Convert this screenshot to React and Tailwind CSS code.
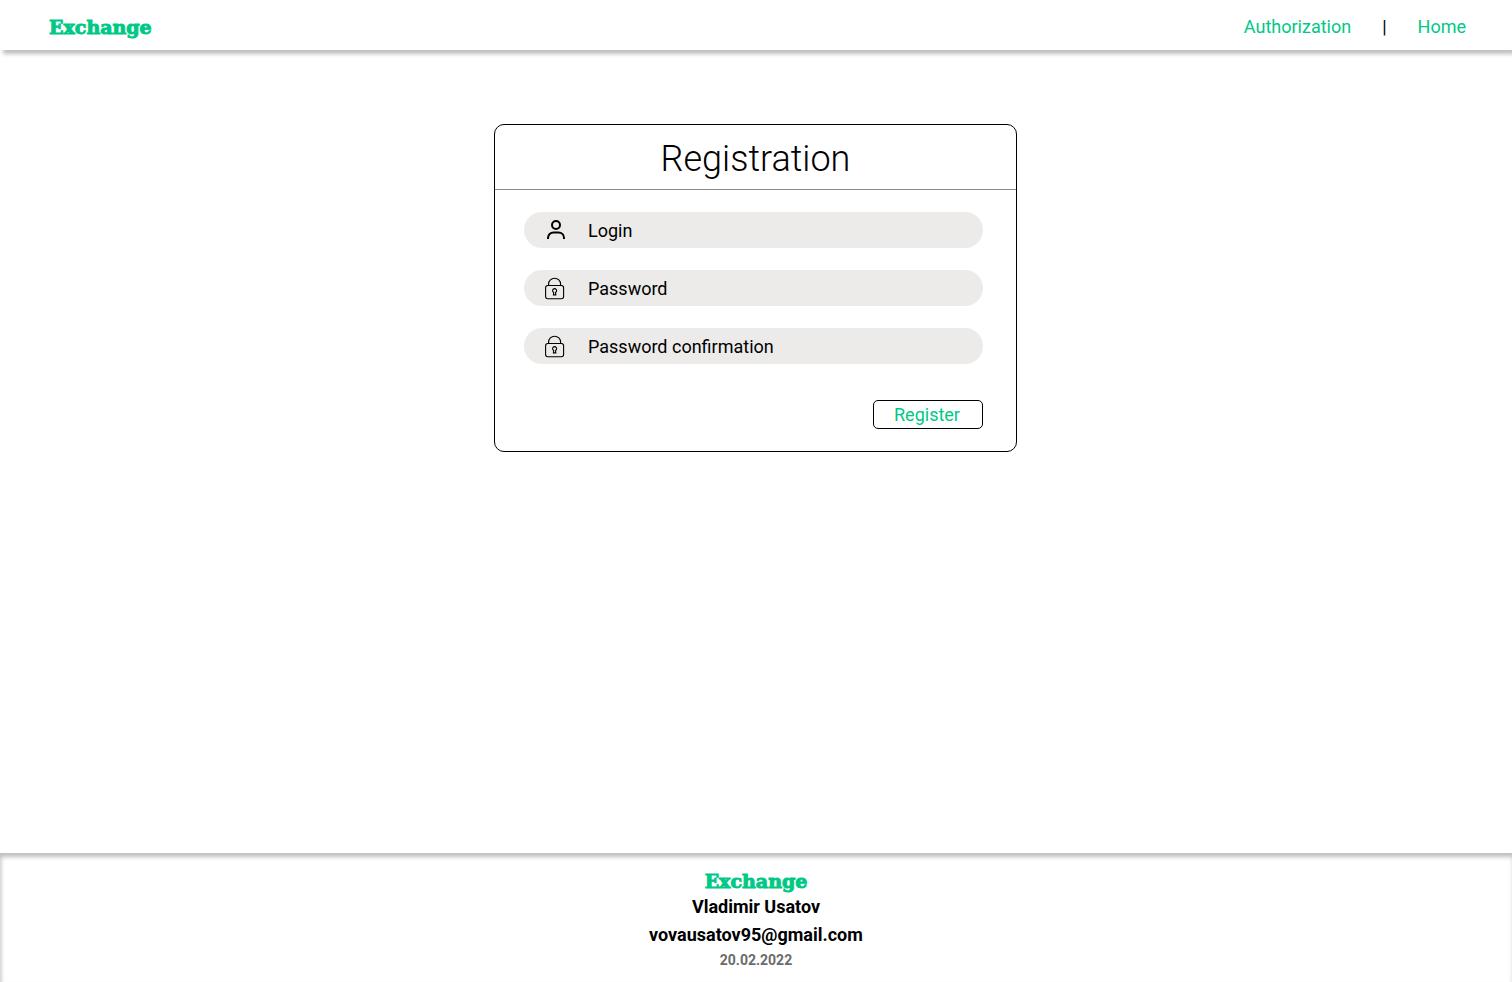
function UserIcon() {
  return (
    <svg width="22" height="20" viewBox="0 0 22 20" fill="none" stroke="black" strokeWidth="2" aria-hidden="true">
      <circle cx="11" cy="5" r="4" />
      <path d="M3 19v-1c0-3.200 2.500-5.500 5.500-5.500h5c3 0 5.500 2.300 5.500 5.500v1" />
    </svg>
  );
}

function LockIcon() {
  return (
    <svg width="20" height="24" viewBox="0 0 20 24" fill="none" stroke="black" strokeWidth="1.100" aria-hidden="true">
      <rect x="0.600" y="9.500" width="18" height="13.200" rx="2.200" />
      <path d="M3.600 9.500V8a6 5.800 0 0 1 12 0v1.500" />
      <path d="M8.700 16.400a2 2 0 1 1 1.800 0l.3 2.500H8.400z" />
    </svg>
  );
}

function Logo() {
  return (
    <span className="font-['DejaVu_Serif',serif] text-[19px] leading-[26px] font-bold text-[#00c985] [-webkit-text-stroke:1px_#00c985]">
      Exchange
    </span>
  );
}

function Field({ id, label, type, autoComplete, icon }) {
  return (
    <div className="flex h-9 items-center rounded-full bg-[#ecebe9] pr-5 pl-[21px]">
      <label htmlFor={id} aria-label={label} className="flex w-[43px] shrink-0">
        {icon}
      </label>
      <input
        id={id}
        type={type}
        placeholder={label}
        autoComplete={autoComplete}
        className="h-9 min-w-0 flex-1 bg-transparent text-[18px] text-black outline-none placeholder:text-black placeholder:opacity-100"
      />
    </div>
  );
}

export default function App() {
  return (
    <div className="flex min-h-screen flex-col bg-white font-[Roboto,sans-serif] text-black">
      <header className="flex h-[50px] items-center justify-between pt-1 pr-[46px] pl-[49px] shadow-[3px_4px_4px_rgba(0,0,0,0.25)]">
        <a href="#home" className="flex">
          <Logo />
        </a>
        <nav className="flex items-center gap-[31px] text-[18px] leading-6">
          <a href="#authorization" className="text-[#00c985]">Authorization</a>
          <span aria-hidden="true">|</span>
          <a href="#home" className="text-[#00c985]">Home</a>
        </nav>
      </header>

      <main className="flex-1 pt-[74px] pr-px">
        <form
          onSubmit={(event) => event.preventDefault()}
          className="mx-auto max-w-[523px] rounded-[10px] border border-black pb-[22px]"
        >
          <h1 className="border-b border-[#8d8d8d] pt-1 text-center text-[36px] leading-[60px] font-light">
            Registration
          </h1>
          <div className="flex flex-col gap-[22px] pt-[22px] pr-[33px] pl-[29px]">
            <Field id="login" label="Login" type="text" autoComplete="username" icon={<UserIcon />} />
            <Field id="password" label="Password" type="password" autoComplete="new-password" icon={<LockIcon />} />
            <Field id="confirmation" label="Password confirmation" type="password" autoComplete="new-password" icon={<LockIcon />} />
          </div>
          <div className="flex justify-end pt-9 pr-[33px]">
            <button type="submit" className="h-[29px] w-[110px] rounded-[5px] border border-black pr-[2px] text-[18px] leading-6 text-[#00c985]">
              Register
            </button>
          </div>
        </form>
      </main>

      <footer className="flex flex-col items-center pt-[15px] pb-[11px] text-center shadow-[inset_1px_4px_4px_rgba(0,0,0,0.25)]">
        <Logo />
        <p className="-mt-px text-[18px] leading-7 font-bold">Vladimir Usatov</p>
        <p className="text-[18px] leading-7 font-bold">vovausatov95@gmail.com</p>
        <p className="text-[14px] leading-[22px] font-bold text-[#6b6b6b]">20.02.2022</p>
      </footer>
    </div>
  );
}
